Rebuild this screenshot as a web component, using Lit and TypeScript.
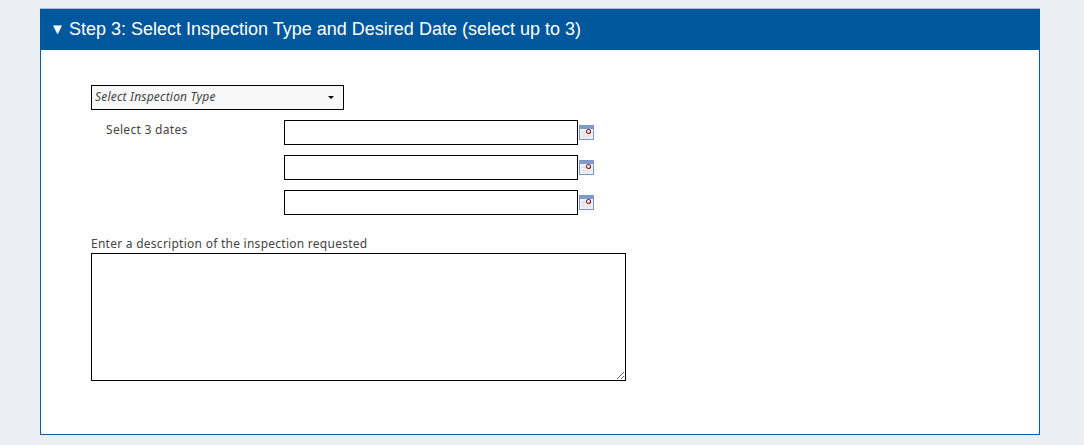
import { LitElement, html, css, svg } from "lit";
import { customElement } from "lit/decorators.js";

const calendar = svg`<svg class="cal" width="15" height="15" viewBox="0 0 15 15">
  <rect x="0.5" y="0.5" width="14" height="14" fill="#f1f2f6" stroke="#7f96c0"/>
  <rect x="1" y="1" width="13" height="3" fill="#7b9bd6"/>
  <path d="M1.5 7.5H13.5M1.5 11H13.5M5 5V14M8.5 5V14" stroke="#dcdfe6" fill="none"/>
  <circle cx="9.5" cy="6.5" r="2" fill="#fff" stroke="#8c1c1c" stroke-width="1.2"/>
</svg>`;

@customElement("app-root")
export class AppRoot extends LitElement {
  static styles = css`
    :host {
      display: block;
      height: 445px;
      box-sizing: border-box;
      padding: 9px 44px 10px 40px;
      background: #ebeef3;
      font-family: "Noto Sans", sans-serif;
      overflow: hidden;
    }
    .panel {
      height: 426px;
      box-sizing: border-box;
      background: #fff;
      border: 1px solid #0a5ca8;
      border-top: 0;
      display: flex;
      flex-direction: column;
      box-shadow: 0 -1px 0 #a9bad0;
    }
    .head {
      margin: 0 -1px;
      height: 41px;
      flex: none;
      background: #00579c;
      color: #fff;
      font: 18px/40px "Liberation Sans", Arial, sans-serif;
      padding-left: 10px;
      display: flex;
    }
    .tri {
      font-size: 15px;
      width: 19px;
      flex: none;
    }
    .body {
      padding: 35px 0 0 50px;
      display: flex;
      flex-direction: column;
      align-items: flex-start;
    }
    .pick {
      position: relative;
      margin: 0 0 10px;
    }
    .pick::after {
      content: "";
      position: absolute;
      left: 237px;
      top: 11px;
      border: 3px solid transparent;
      border-top: 3px solid #000;
      border-bottom: 0;
      pointer-events: none;
    }
    select {
      appearance: none;
      display: block;
      width: 253px;
      height: 25px;
      box-sizing: border-box;
      border: 1px solid #000;
      border-radius: 0;
      background: #f8f8f8;
      color: #444;
      font: italic 12px/21px "Noto Sans", sans-serif;
      letter-spacing: 0.2px;
      padding: 0 0 2px 3px;
      margin: 0;
    }
    .dates {
      display: grid;
      grid-template-columns: 178px 294px 16px;
      row-gap: 10px;
      margin-left: 15px;
      margin-bottom: 21px;
      align-items: start;
    }
    .lbl {
      font-size: 12px;
      letter-spacing: 0.3px;
      color: #444;
      line-height: 20px;
    }
    input {
      width: 294px;
      height: 25px;
      box-sizing: border-box;
      border: 1px solid #000;
      border-radius: 0;
      background: #fff;
      padding: 0;
      margin: 0;
      display: block;
    }
    .cal {
      display: block;
      margin: 5px 0 0 1px;
    }
    .desc {
      font-size: 12px;
      letter-spacing: 0.26px;
      color: #444;
      line-height: 15px;
      margin-bottom: 2px;
    }
    textarea {
      width: 535px;
      height: 128px;
      box-sizing: border-box;
      border: 1px solid #000;
      border-radius: 0;
      padding: 0;
      margin: 0;
      display: block;
      background: #fff;
    }
  `;

  render() {
    return html`<section class="panel">
      <div class="head"><span class="tri">▼</span><span>Step 3: Select Inspection Type and Desired Date (select up to 3)</span></div>
      <div class="body">
        <div class="pick"><select><option>Select Inspection Type</option></select></div>
        <div class="dates">
          <span class="lbl">Select 3 dates</span><input type="text" />${calendar}
          <span></span><input type="text" />${calendar}
          <span></span><input type="text" />${calendar}
        </div>
        <label class="desc">Enter a description of the inspection requested</label>
        <textarea></textarea>
      </div>
    </section>`;
  }
}
